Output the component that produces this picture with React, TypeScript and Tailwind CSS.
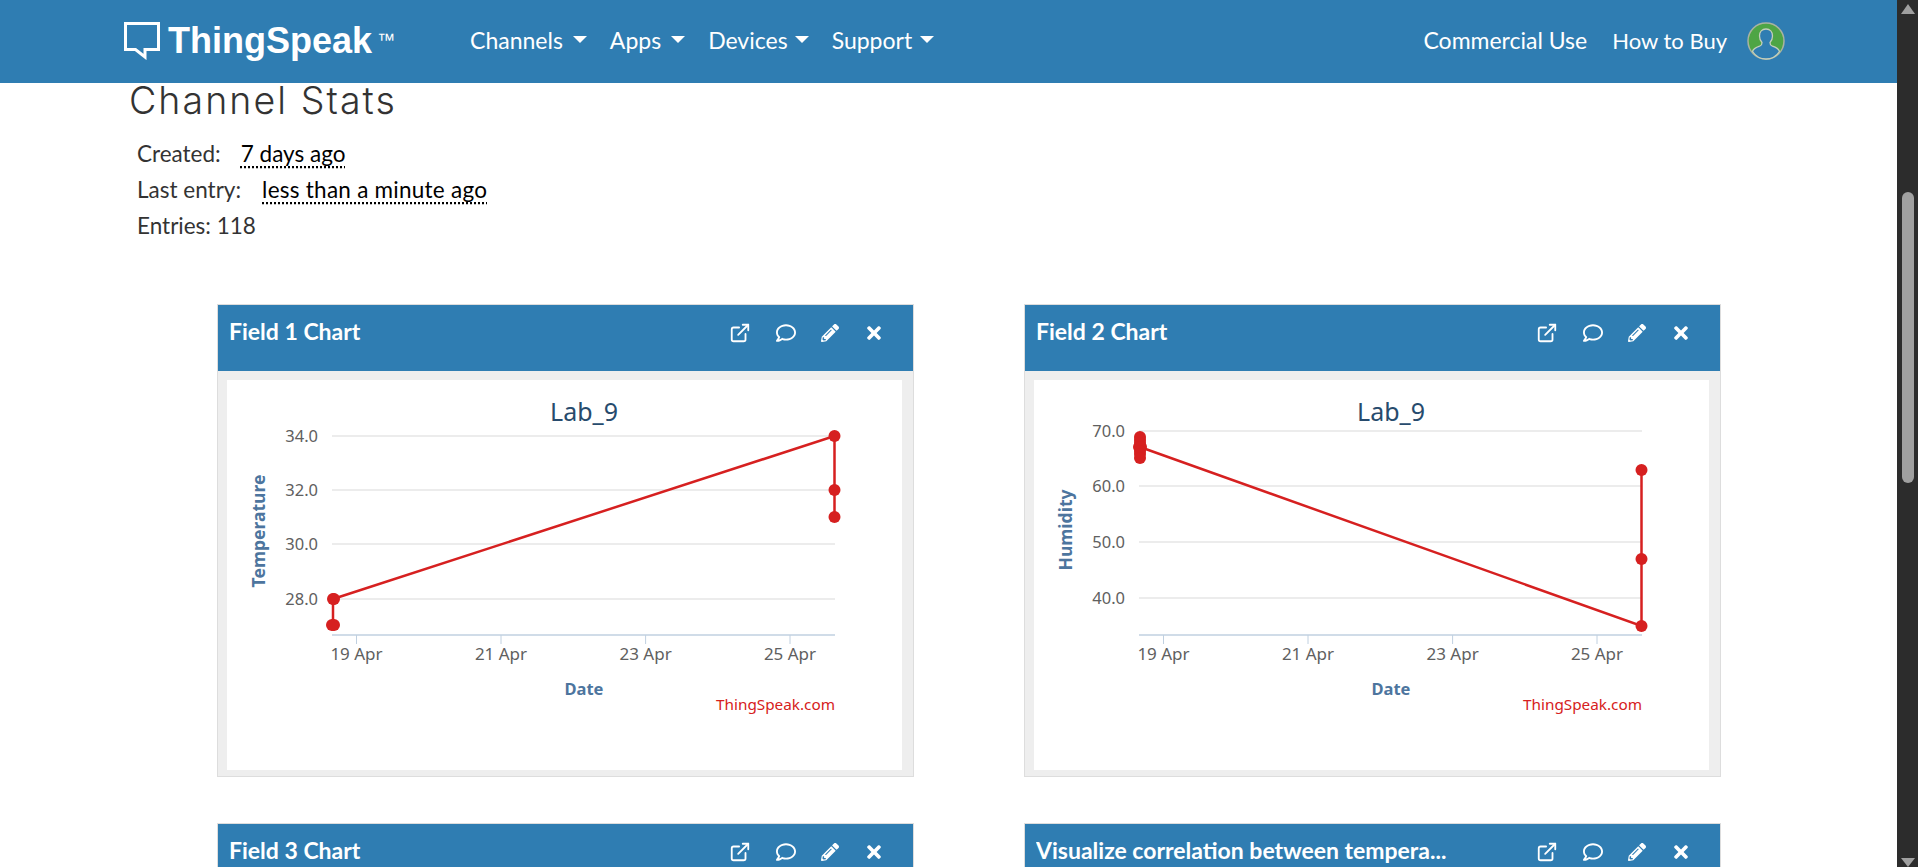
import React from 'react';
import { ExternalLink } from 'lucide-react';
import { FaRegComment, FaPencilAlt, FaTimes } from 'react-icons/fa';

const sans = "font-['Lato','Noto_Sans',sans-serif]";

const NavItem = ({ label, gap }: { label: string; gap: string }) => (
  <a className={`flex items-center text-[23px] text-white ${gap}`}>
    {label}
    <span className="mt-[-2px] border-x-[7px] border-t-[7px] border-x-transparent border-t-white" />
  </a>
);

const Logo = () => (
  <div className="flex items-start">
    <svg width="36" height="38" viewBox="0 0 36 38" className="mt-[1px]">
      <path d="M1.5 1.5H34.5V27.5H21V35L11.5 27.5H1.5Z" fill="none" stroke="#fff" strokeWidth="3" />
    </svg>
    <span className="ml-[8px] font-['Liberation_Sans',sans-serif] text-[36px] leading-[40px] font-bold text-white">ThingSpeak</span>
    <span className="ml-[5px] mt-[7px] font-['Liberation_Sans',sans-serif] text-[18px] leading-[24px] text-white">™</span>
  </div>
);

const Avatar = () => (
  <svg width="38" height="38" viewBox="0 0 38 38">
    <circle cx="19" cy="19" r="18" fill="#4ea545" stroke="#a9b3a0" strokeWidth="1.5" />
    <path
      d="M19 7c-4 0-6.500 3-6.500 7 0 3 1 5 2.500 6.500 0 2-.5 3-2 3.500-3 1-6.500 2-7.500 5.500 3 4.500 8.500 7.500 13.500 7.500s10.500-3 13.500-7.500c-1-3.500-4.500-4.500-7.500-5.500-1.500-.5-2-1.500-2-3.500 1.500-1.500 2.500-3.500 2.500-6.500 0-4-2.500-7-6.500-7Z"
      fill="#2f7db2"
      stroke="#c4cfbc"
      strokeWidth="1.300"
    />
  </svg>
);

const Navbar = () => (
  <header className="flex h-[83px] shrink-0 items-center bg-[#2f7db2] pb-[2px] pl-[124px] pr-[112px]">
    <Logo />
    <nav className="ml-[75px] flex items-center gap-[23px]">
      <NavItem label="Channels" gap="gap-[10px]" />
      <NavItem label="Apps" gap="gap-[10px]" />
      <NavItem label="Devices" gap="gap-[7px]" />
      <NavItem label="Support" gap="gap-[8px]" />
    </nav>
    <div className="ml-auto flex items-center">
      <a className="text-[23px] text-white">Commercial Use</a>
      <a className="ml-[25px] text-[22px] text-white">How to Buy</a>
      <div className="ml-[20px] flex"><Avatar /></div>
    </div>
  </header>
);

interface SeriesProps {
  yLabel: string;
  yLabelY: number;
  ticks: { label: string; y: number }[];
  line: [number, number][];
  dots: [number, number][];
}

const ChartSvg = ({ yLabel, yLabelY, ticks, line, dots }: SeriesProps) => (
  <svg width="675" height="390" viewBox="0 0 675 390" className="block font-['Noto_Sans',sans-serif]">
    <text x="357" y="41" textAnchor="middle" fontSize="25" fill="#274b6d">Lab_9</text>
    {ticks.map((t) => (
      <g key={t.label}>
        <line x1="105" x2="608" y1={t.y} y2={t.y} stroke="#e6e6e6" strokeWidth="1.500" />
        <text x="91" y={t.y + 6} textAnchor="end" fontSize="16.500" fill="#606060">{t.label}</text>
      </g>
    ))}
    <line x1="105" x2="608" y1="255" y2="255" stroke="#c0d0e0" strokeWidth="1.500" />
    {[
      { x: 129.5, label: '19 Apr' },
      { x: 274, label: '21 Apr' },
      { x: 418.6, label: '23 Apr' },
      { x: 563, label: '25 Apr' },
    ].map((t) => (
      <g key={t.label}>
        <line x1={t.x} x2={t.x} y1="255" y2="264" stroke="#c0d0e0" strokeWidth="1" />
        <text x={t.x} y="280" textAnchor="middle" fontSize="17" fill="#606060">{t.label}</text>
      </g>
    ))}
    <text x="357" y="315" textAnchor="middle" fontSize="16.500" fontWeight="700" fill="#4d759e">Date</text>
    <text
      transform={`translate(38 ${yLabelY}) rotate(-90)`}
      textAnchor="middle"
      fontSize="17.500"
      fontWeight="700"
      fill="#4d759e"
    >
      {yLabel}
    </text>
    <text x="608" y="330" textAnchor="end" fontSize="15.300" fill="#d62020">ThingSpeak.com</text>
    <polyline points={line.map((p) => p.join(',')).join(' ')} fill="none" stroke="#d62020" strokeWidth="2.500" />
    {dots.map(([x, y], i) => (
      <circle key={i} cx={x} cy={y} r="6" fill="#d62020" />
    ))}
  </svg>
);

const CardHeader = ({ title }: { title: string }) => (
  <div className="flex h-[66px] items-start bg-[#2f7db2] pl-[11px] pr-[29px] pt-[11px]">
    <h3 className={`${sans} w-[480px] truncate text-[23px] leading-[30px] font-bold text-white`}>{title}</h3>
    <div className="ml-auto flex items-center gap-[25px] pt-[6px] text-white">
      <ExternalLink size={22} strokeWidth={2} />
      <FaRegComment size={20} />
      <FaPencilAlt size={18} />
      <FaTimes size={20} />
    </div>
  </div>
);

const ChartCard = ({ title, chart }: { title: string; chart?: SeriesProps }) => (
  <div className="w-[697px] shrink-0 border border-[#dddddd] bg-[#eeeeee]">
    <CardHeader title={title} />
    <div className="pb-[6px] pl-[9px] pr-[11px] pt-[9px]">
      <div className="h-[390px] bg-white">{chart && <ChartSvg {...chart} />}</div>
    </div>
  </div>
);

const fieldOne: SeriesProps = {
  yLabel: 'Temperature',
  yLabelY: 151,
  ticks: [
    { label: '34.0', y: 56 },
    { label: '32.0', y: 110 },
    { label: '30.0', y: 164 },
    { label: '28.0', y: 219 },
  ],
  line: [[106, 245], [106, 219], [607.5, 56], [607.5, 137]],
  dots: [[105, 245], [107, 245], [106, 219], [107, 219], [607.5, 56], [607.5, 110], [607.5, 137]],
};

const fieldTwo: SeriesProps = {
  yLabel: 'Humidity',
  yLabelY: 150,
  ticks: [
    { label: '70.0', y: 51 },
    { label: '60.0', y: 106 },
    { label: '50.0', y: 162 },
    { label: '40.0', y: 218 },
  ],
  line: [[106, 67], [607.5, 246], [607.5, 90]],
  dots: [
    [106, 57], [106, 60], [106, 63], [105, 67], [107, 67], [106, 71], [106, 74], [106, 78],
    [607.5, 90], [607.5, 179], [607.5, 246],
  ],
};

const Scrollbar = () => (
  <div className="flex w-[21px] shrink-0 flex-col items-center bg-[#2c2c2c]">
    <span className="mt-[4px] border-x-[7px] border-b-[10px] border-x-transparent border-b-[#a0a0a0]" />
    <div className="mt-[178px] h-[291px] w-[12px] rounded-full bg-[#a0a0a0]" />
    <span className="mt-auto border-x-[7px] border-t-[9px] border-x-transparent border-t-[#a0a0a0]" />
  </div>
);

export default function App() {
  return (
    <div className={`${sans} flex h-[867px] overflow-hidden bg-white`}>
      <div className="flex min-w-0 flex-1 flex-col overflow-hidden">
        <Navbar />
        <main className="pl-[130px]">
          <h2 className="ml-[-1px] mt-[-4px] font-['Inter',sans-serif] text-[37.5px] leading-[44px] font-light tracking-[0.055em] text-[#333333]">
            Channel Stats
          </h2>
          <div className="ml-[7px] mt-[13px] flex flex-col text-[22.5px] leading-[36px] text-[#333333]">
            <p>
              Created:
              <span className="ml-[20px] text-black underline decoration-dotted underline-offset-[4px]">7 days ago</span>
            </p>
            <p>
              Last entry:
              <span className="ml-[21px] tracking-[0.25px] text-black underline decoration-dotted underline-offset-[4px]">less than a minute ago</span>
            </p>
            <p>Entries: 118</p>
          </div>
          <div className="ml-[87px] mt-[60px] flex flex-col gap-[46px]">
            <div className="flex gap-[110px]">
              <ChartCard title="Field 1 Chart" chart={fieldOne} />
              <ChartCard title="Field 2 Chart" chart={fieldTwo} />
            </div>
            <div className="flex gap-[110px]">
              <ChartCard title="Field 3 Chart" />
              <ChartCard title="Visualize correlation between tempera..." />
            </div>
          </div>
        </main>
      </div>
      <Scrollbar />
    </div>
  );
}
